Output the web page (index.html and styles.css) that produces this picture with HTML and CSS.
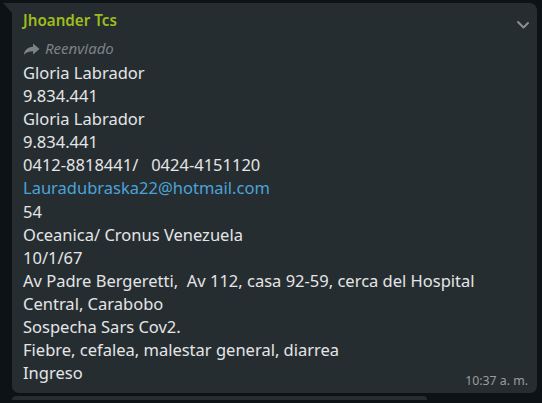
FILE: index.html
```html
<!DOCTYPE html>
<html lang="es">
<head>
<meta charset="utf-8">
<title>Mensaje</title>
<link rel="stylesheet" href="styles.css">
</head>
<body>
<div class="chat">
  <div class="msg">
    <span class="tail"></span>
    <div class="bubble">
      <svg class="menu" width="14" height="12" viewBox="0 0 14 12"><path d="M2 3 L7.5 8.5 L12 4" fill="none" stroke="#8a8f91" stroke-width="2" stroke-linecap="round" stroke-linejoin="round"/></svg>
      <div class="sender">Jhoander Tcs</div>
      <div class="fwd">
        <svg class="fwd-icon" width="17" height="14" viewBox="0 0 17 14"><path d="M10 1.5 L16.5 7 L10 12.5 V9.2 C5.8 9.2 3 10.4 0.8 13 C1.6 8 4.6 5.2 10 4.8 Z" fill="#7d8284"/></svg>
        <span>Reenviado</span>
      </div>
      <div class="text">
        <div class="line">Gloria Labrador</div>
        <div class="line">9.834.441</div>
        <div class="line">Gloria Labrador</div>
        <div class="line">9.834.441</div>
        <div class="line">0412-8818441/   0424-4151120</div>
        <div class="line"><a class="link" href="#">Lauradubraska22@hotmail.com</a></div>
        <div class="line">54</div>
        <div class="line">Oceanica/ Cronus Venezuela</div>
        <div class="line">10/1/67</div>
        <div class="line">Av Padre Bergeretti,  Av 112, casa 92-59, cerca del Hospital</div>
        <div class="line">Central, Carabobo</div>
        <div class="line">Sospecha Sars Cov2.</div>
        <div class="line">Fiebre, cefalea, malestar general, diarrea</div>
        <div class="line">Ingreso</div>
      </div>
      <span class="time">10:37 a. m.</span>
    </div>
  </div>
  <div class="msg next">
    <div class="bubble stub"></div>
  </div>
</div>
</body>
</html>
```
FILE: styles.css
```css
html, body {
  margin: 0;
  padding: 0;
  height: 100%;
  background: #0c1215;
  overflow: hidden;
}
.chat {
  padding: 3px 5px 0 12px;
  display: flex;
  flex-direction: column;
  gap: 3px;
}
.msg {
  position: relative;
}
.tail {
  position: absolute;
  left: -9px;
  top: 0;
  width: 0;
  height: 0;
  border-top: 10px solid #262d31;
  border-left: 9px solid transparent;
}
.bubble {
  position: relative;
  background: #262d31;
  border-radius: 0 7px 7px 7px;
  padding: 6px 9px 9px 11px;
  font-family: "Noto Sans", sans-serif;
  color: #e4e5e6;
}
.menu {
  position: absolute;
  right: 7px;
  top: 16px;
}
.sender {
  font-size: 15.2px;
  font-weight: 600;
  line-height: 22px;
  color: #9ebd1c;
}
.fwd {
  display: flex;
  align-items: center;
  gap: 5px;
  height: 22px;
  margin-top: 6px;
  font-size: 15px;
  font-style: italic;
  color: #7d8284;
}
.fwd-icon {
  margin-top: 1px;
}
.text {
  margin-top: 2px;
  font-size: 16.5px;
  line-height: 23.1px;
}
.line {
  white-space: pre-wrap;
}
.link {
  color: #4ba4d8;
  text-decoration: none;
}
.time {
  position: absolute;
  right: 9px;
  bottom: 5px;
  font-size: 12.3px;
  line-height: 15px;
  color: #9a9d9f;
}
.stub {
  height: 4px;
  width: 415px;
  border-radius: 7px 7px 0 0;
  padding: 0;
}
```
